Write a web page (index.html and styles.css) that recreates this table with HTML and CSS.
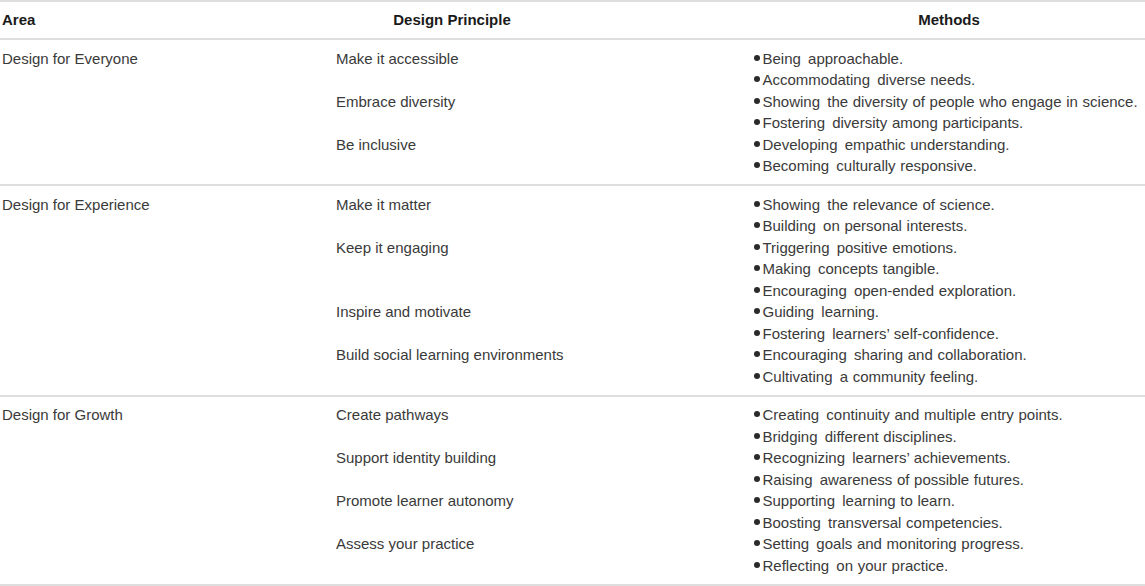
FILE: index.html
```html
<!DOCTYPE html>
<html lang="en">
<head>
<meta charset="utf-8">
<title>Design Principles</title>
<link rel="stylesheet" href="styles.css">
</head>
<body>
<div class="table">
  <div class="head">
    <div class="h-area">Area</div>
    <div class="h-principle">Design Principle</div>
    <div class="h-methods">Methods</div>
  </div>

  <div class="group">
    <div class="area">Design for Everyone</div>
    <div class="items">
      <div class="item">
        <div class="principle">Make it accessible</div>
        <ul class="methods">
          <li><span class="lead">Being</span> approachable.</li>
          <li><span class="lead">Accommodating</span> diverse needs.</li>
        </ul>
      </div>
      <div class="item">
        <div class="principle">Embrace diversity</div>
        <ul class="methods">
          <li><span class="lead">Showing</span> the diversity of people who engage in science.</li>
          <li><span class="lead">Fostering</span> diversity among participants.</li>
        </ul>
      </div>
      <div class="item">
        <div class="principle">Be inclusive</div>
        <ul class="methods">
          <li><span class="lead">Developing</span> empathic understanding.</li>
          <li><span class="lead">Becoming</span> culturally responsive.</li>
        </ul>
      </div>
    </div>
  </div>

  <div class="group">
    <div class="area">Design for Experience</div>
    <div class="items">
      <div class="item">
        <div class="principle">Make it matter</div>
        <ul class="methods">
          <li><span class="lead">Showing</span> the relevance of science.</li>
          <li><span class="lead">Building</span> on personal interests.</li>
        </ul>
      </div>
      <div class="item">
        <div class="principle">Keep it engaging</div>
        <ul class="methods">
          <li><span class="lead">Triggering</span> positive emotions.</li>
          <li><span class="lead">Making</span> concepts tangible.</li>
          <li><span class="lead">Encouraging</span> open-ended exploration.</li>
        </ul>
      </div>
      <div class="item">
        <div class="principle">Inspire and motivate</div>
        <ul class="methods">
          <li><span class="lead">Guiding</span> learning.</li>
          <li><span class="lead">Fostering</span> learners’ self-confidence.</li>
        </ul>
      </div>
      <div class="item">
        <div class="principle">Build social learning environments</div>
        <ul class="methods">
          <li><span class="lead">Encouraging</span> sharing and collaboration.</li>
          <li><span class="lead">Cultivating</span> a community feeling.</li>
        </ul>
      </div>
    </div>
  </div>

  <div class="group">
    <div class="area">Design for Growth</div>
    <div class="items">
      <div class="item">
        <div class="principle">Create pathways</div>
        <ul class="methods">
          <li><span class="lead">Creating</span> continuity and multiple entry points.</li>
          <li><span class="lead">Bridging</span> different disciplines.</li>
        </ul>
      </div>
      <div class="item">
        <div class="principle">Support identity building</div>
        <ul class="methods">
          <li><span class="lead">Recognizing</span> learners’ achievements.</li>
          <li><span class="lead">Raising</span> awareness of possible futures.</li>
        </ul>
      </div>
      <div class="item">
        <div class="principle">Promote learner autonomy</div>
        <ul class="methods">
          <li><span class="lead">Supporting</span> learning to learn.</li>
          <li><span class="lead">Boosting</span> transversal competencies.</li>
        </ul>
      </div>
      <div class="item">
        <div class="principle">Assess your practice</div>
        <ul class="methods">
          <li><span class="lead">Setting</span> goals and monitoring progress.</li>
          <li><span class="lead">Reflecting</span> on your practice.</li>
        </ul>
      </div>
    </div>
  </div>
</div>
</body>
</html>
```

FILE: styles.css
```css
* { box-sizing: border-box; }

html, body {
  margin: 0;
  padding: 0;
  background: #ffffff;
}

body {
  font-family: "Liberation Sans", Arial, Helvetica, sans-serif;
  font-size: 15px;
  line-height: 21.5px;
  color: #3a3a3a;
}

.table {
  width: 1145px;
  border-top: 2px solid #dedede;
}

.head {
  display: grid;
  grid-template-columns: 336px 417px 1fr;
  padding: 7px 0 7.5px;
  border-bottom: 2px solid #dedede;
  font-weight: bold;
  color: #1a1a1a;
}

.h-area {
  padding-left: 2px;
}

.h-principle {
  width: 232px;
  text-align: center;
}

.h-methods {
  text-align: center;
}

.group {
  display: grid;
  grid-template-columns: 336px 1fr;
  padding: 7.5px 0;
  border-bottom: 2px solid #dedede;
}

.area {
  padding-left: 2px;
}

.items {
  display: flex;
  flex-direction: column;
}

.item {
  display: grid;
  grid-template-columns: 417px 1fr;
}

.methods {
  list-style: none;
  margin: 0;
  padding: 0;
  white-space: nowrap;
  word-spacing: 0.5px;
}

.methods li::before {
  content: "";
  display: inline-block;
  width: 6px;
  height: 6px;
  margin: 0 3px 0 0.5px;
  border-radius: 50%;
  background: #2a2a2a;
  vertical-align: 3px;
}

.lead {
  margin-right: 2.5px;
}
```
